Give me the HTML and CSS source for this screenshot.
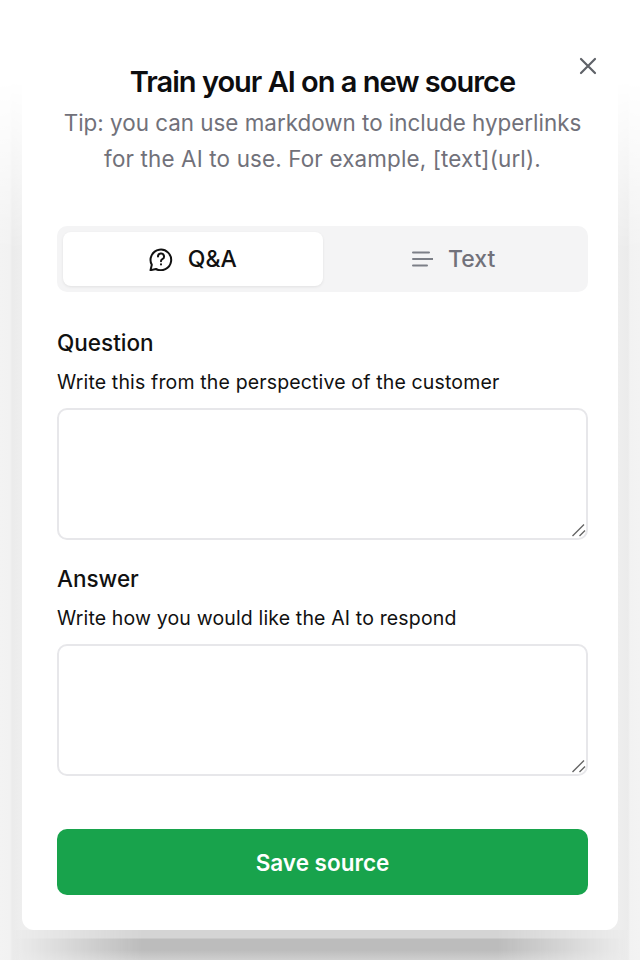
FILE: index.html
```html
<!DOCTYPE html>
<html lang="en">
<head>
    <meta charset="UTF-8">
    <title>Train your AI</title>
    <link rel="stylesheet" href="styles.css">
</head>
<body>
    <div class="modal">
        <button class="close" aria-label="Close">
            <svg width="24" height="24" viewBox="0 0 24 24" fill="none" stroke="#5f6268" stroke-width="2.2" stroke-linecap="round"><path d="M5 5l14 14M19 5L5 19"/></svg>
        </button>
        <h1>Train your AI on a new source</h1>
        <p class="tip">Tip: you can use markdown to include hyperlinks<br><span class="tip-line">for the AI to use. For example, [text](url).</span></p>

        <div class="tabs">
            <div class="tab active">
                <svg width="24" height="24" viewBox="0 0 24 24" fill="none" stroke="#111" stroke-width="2" stroke-linecap="round" stroke-linejoin="round">
                    <path d="M1.500 23.200l1.300-5.400A10.300 10.300 0 1 1 7 22z"/>
                    <path d="M9 9.500a3 3 0 1 1 4.300 2.700c-1 .5-1.300 1-1.300 2"/>
                    <path d="M12 17.300v.1"/>
                </svg>
                <span>Q&amp;A</span>
            </div>
            <div class="tab">
                <svg width="24" height="24" viewBox="0 0 24 24" fill="none" stroke="#7c7f87" stroke-width="2" stroke-linecap="round"><path d="M4 5.500h16M4 12h20M4 18.500h14"/></svg>
                <span>Text</span>
            </div>
        </div>

        <div class="field">
            <label for="question">Question</label>
            <p class="hint">Write this from the perspective of the customer</p>
            <div class="area">
                <textarea id="question"></textarea>
                <svg class="grip" width="16" height="16" viewBox="0 0 16 16" fill="none" stroke="#666" stroke-width="1.400"><path d="M1.500 14L13 2.500M8.500 14L14 8.500"/></svg>
            </div>
        </div>
        <div class="field">
            <label for="answer">Answer</label>
            <p class="hint">Write how you would like the AI to respond</p>
            <div class="area">
                <textarea id="answer"></textarea>
                <svg class="grip" width="16" height="16" viewBox="0 0 16 16" fill="none" stroke="#666" stroke-width="1.400"><path d="M1.500 14L13 2.500M8.500 14L14 8.500"/></svg>
            </div>
        </div>

        <button class="save">Save source</button>
    </div>
</body>
</html>
```

FILE: styles.css
```css
body {
    margin: 0;
    height: 960px;
    overflow: hidden;
    background: #fff;
    font-family: 'Inter', sans-serif;
    color: #111;
}

.modal {
    position: relative;
    box-sizing: border-box;
    height: 930px;
    margin: 0 22px;
    padding: 64px 30px 0 35px;
    background: #fff;
    border-radius: 0 0 12px 12px;
}

/* side shadow, fades out towards the top */
.modal::before {
    content: "";
    position: absolute;
    z-index: -1;
    inset: 80px -22px -30px -22px;
    background: linear-gradient(to right, #f3f3f3 0, #f2f2f2 10px, #ebebeb 12px, #eeeeee 22px, #eeeeee calc(100% - 22px), #ebebeb calc(100% - 12px), #f2f2f2 calc(100% - 10px), #f3f3f3 100%);
    -webkit-mask-image: linear-gradient(to bottom, transparent 0, #000 170px);
    mask-image: linear-gradient(to bottom, transparent 0, #000 170px);
}

/* heavier shadow under the card */
.modal::after {
    content: "";
    position: absolute;
    z-index: -1;
    left: -10px;
    right: -10px;
    bottom: -30px;
    height: 30px;
    background: linear-gradient(to bottom, #d4d4d4 0, #d4d4d4 8px, #bcbcbc 9px, #bcbcbc 20px, #cfcfcf 30px);
    -webkit-mask-image: linear-gradient(to right, transparent 0, #000 130px, #000 calc(100% - 130px), transparent 100%);
    mask-image: linear-gradient(to right, transparent 0, #000 130px, #000 calc(100% - 130px), transparent 100%);
}

h1 {
    margin: 0;
    font-size: 29px;
    line-height: 36px;
    font-weight: 600;
    letter-spacing: -1px;
    text-align: center;
    color: #0d0d0f;
}

.tip {
    margin: 5px 0 0;
    font-size: 22.400px;
    line-height: 36px;
    text-align: center;
    color: #71717a;
}

.tip-line {
    letter-spacing: 0.16px;
}

.close {
    position: absolute;
    top: 54px;
    right: 18px;
    padding: 0;
    border: none;
    background: none;
    display: flex;
}

.tabs {
    display: flex;
    margin-top: 49px;
    padding: 6px;
    background: #f4f4f5;
    border-radius: 10px;
}

.tab {
    flex: 1;
    height: 54px;
    display: flex;
    align-items: center;
    justify-content: center;
    gap: 15px;
    font-size: 23px;
    font-weight: 500;
    color: #71717a;
    border-radius: 8px;
}

.tab.active {
    background: #fff;
    color: #111;
    box-shadow: 0 1px 3px rgba(0, 0, 0, 0.08);
}

.field {
    margin-top: 35px;
}

.field + .field {
    margin-top: 23px;
}

label {
    display: block;
    font-size: 22.500px;
    line-height: 32px;
    font-weight: 500;
}

.hint {
    margin: 9px 0 0;
    font-size: 19.500px;
    line-height: 28px;
    letter-spacing: 0.15px;
}

.area {
    position: relative;
    margin-top: 12px;
}

textarea {
    display: block;
    box-sizing: border-box;
    width: 100%;
    height: 132px;
    border: 2px solid #e7e7ea;
    border-radius: 10px;
    background: #fff;
    resize: none;
}

.grip {
    position: absolute;
    right: 1px;
    bottom: 2px;
}

.save {
    display: block;
    width: 100%;
    height: 66px;
    margin-top: 53px;
    border: none;
    border-radius: 10px;
    background: #18a34c;
    color: #fff;
    font-family: inherit;
    font-size: 22.500px;
    font-weight: 600;
}
```
